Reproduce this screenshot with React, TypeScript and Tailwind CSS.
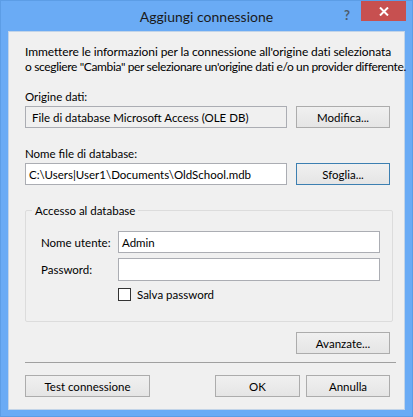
import React from "react";

function Btn({ children, w = "w-[94px]", focused = false }: { children: React.ReactNode; w?: string; focused?: boolean }) {
  return (
    <button
      className={`${w} h-[22px] flex items-center justify-center border ${focused ? "border-[#3c7fb1]" : "border-[#acacac]"} bg-gradient-to-b from-[#f0f0f0] to-[#e5e5e5] text-[11.5px] text-black whitespace-nowrap`}
    >
      {children}
    </button>
  );
}

export default function App() {
  return (
    <div
      className="w-[413px] h-[417px] bg-[#6aabf5] border border-[#5c9de6] flex flex-col text-black"
      style={{ fontFamily: 'Lato, "Noto Sans", sans-serif' }}
    >
      {/* title bar */}
      <div className="relative h-[30px] flex items-center justify-center shrink-0">
        <span className="text-[14px] text-[#1a1a1a] leading-none mt-[1px]">Aggiungi connessione</span>
        <span className="absolute left-[343px] top-[5px] text-[13px] font-bold text-[#4d5b6a]">?</span>
        <div className="absolute left-[360px] top-0 w-[45px] h-[20px] bg-[#c75050] flex items-center justify-center">
          <svg width="10" height="9" viewBox="0 0 10 9">
            <path d="M1 0.5 L9 8.5 M9 0.5 L1 8.5" stroke="#fff" strokeWidth="2" />
          </svg>
        </div>
      </div>

      {/* content */}
      <div className="mx-[7px] mb-[6px] flex-1 bg-[#f0f0f0] border border-[#5a96d8]/30 pl-[16px] pr-[14px] pt-[12px] flex flex-col text-[11.5px] leading-[15px]">
        <p className="whitespace-nowrap text-[12px] tracking-[-0.1px]">Immettere le informazioni per la connessione all'origine dati selezionata</p>
        <p className="whitespace-nowrap text-[12px] tracking-[-0.35px]">o scegliere "Cambia" per selezionare un'origine dati e/o un provider differente.</p>

        <div className="mt-[15px]">Origine dati:</div>
        <div className="mt-[2px] flex items-center justify-between">
          <div className="w-[262px] h-[22px] border border-[#abadb3] bg-[#f0f0f0] flex items-center px-[6px] whitespace-nowrap">
            File di database Microsoft Access (OLE DB)
          </div>
          <Btn>Modifica...</Btn>
        </div>

        <div className="mt-[18px]">Nome file di database:</div>
        <div className="mt-[2px] flex items-center justify-between">
          <div className="w-[262px] h-[22px] border border-[#abadb3] bg-white flex items-center px-[3px] whitespace-nowrap">
            C:\Users|User1\Documents\OldSchool.mdb
          </div>
          <Btn focused>Sfoglia...</Btn>
        </div>

        <fieldset className="mt-[18px] w-[368px] border border-[#dcdcdc] rounded-[2px] pl-[15px] pr-[12px] pb-[19px]">
          <legend className="-ml-[9px] px-[3px] leading-[15px]">Accesso al database</legend>
          <div className="mt-[13px] flex items-center">
            <span className="w-[77px] whitespace-nowrap">Nome utente:</span>
            <div className="w-[262px] h-[22px] border border-[#abadb3] bg-white flex items-center px-[3px]">Admin</div>
          </div>
          <div className="mt-[5px] flex items-center">
            <span className="w-[77px]">Password:</span>
            <div className="w-[262px] h-[23px] border border-[#abadb3] bg-white"></div>
          </div>
          <div className="mt-[6px] ml-[77px] flex items-center">
            <div className="w-[13px] h-[13px] border border-[#333] bg-white"></div>
            <span className="ml-[6px]">Salva password</span>
          </div>
        </fieldset>

        <div className="mt-[10px] flex justify-end">
          <Btn>Avanzate...</Btn>
        </div>

        <div className="mt-[8px] h-px w-[371px] bg-[#a0a0a0]"></div>

        <div className="mt-[12px] flex items-center">
          <Btn w="w-[125px]">Test connessione</Btn>
          <div className="ml-auto flex gap-[6px]">
            <Btn w="w-[85px]">OK</Btn>
            <Btn w="w-[84px]">Annulla</Btn>
          </div>
        </div>
      </div>
    </div>
  );
}
